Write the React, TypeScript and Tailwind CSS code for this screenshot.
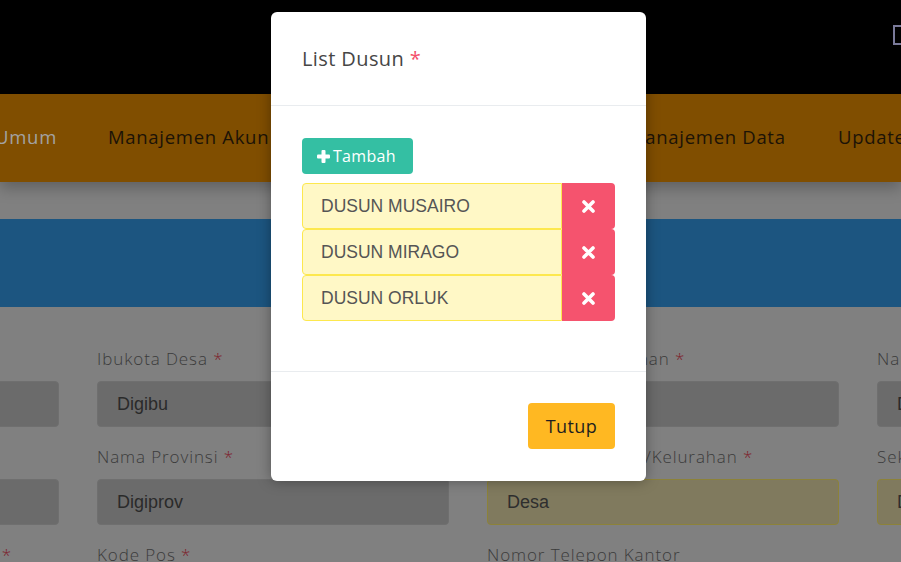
import React from "react";

const poppins = { fontFamily: '"Open Sans", "Noto Sans", sans-serif' };
const arial = { fontFamily: '"Liberation Sans", Arial, sans-serif' };

function Field({ label, req, value, yellow }: { label?: string; req?: boolean; value?: string; yellow?: boolean }) {
  return (
    <div className="w-[352px] shrink-0 flex flex-col">
      <div className="h-[24px] text-[17px] tracking-[0.9px] font-light text-[#3b3b3b] whitespace-nowrap leading-[24px]" style={poppins}>
        {label}
        {req && <span className="text-[#7e1d2a]"> *</span>}
      </div>
      {value !== undefined && (
        <div
          className={
            "mt-[10px] h-[46px] rounded-[4px] border flex items-center px-[19px] text-[18px] " +
            (yellow ? "bg-[#807a5e] border-[#8c8239] text-[#2e2e2e]" : "bg-[#6b6b6b] border-[#6f6f6f] text-[#2a2a2a]")
          }
          style={arial}
        >
          {value}
        </div>
      )}
    </div>
  );
}

function Plus() {
  return (
    <svg width="13" height="13" viewBox="0 0 13 13" className="mr-[3px]">
      <rect x="4.5" y="0" width="4" height="13" rx="1" fill="white" />
      <rect x="0" y="4.5" width="13" height="4" rx="1" fill="white" />
    </svg>
  );
}

function Times() {
  return (
    <svg width="13" height="13" viewBox="0 0 13 13">
      <path d="M2 2 L11 11 M11 2 L2 11" stroke="white" strokeWidth="3.6" strokeLinecap="round" />
    </svg>
  );
}

function Item({ name }: { name: string }) {
  return (
    <div className="flex h-[46px]">
      <div
        className="flex-1 bg-[#fff8c6] border border-[#fde84e] rounded-l-[4px] flex items-center pl-[18px] text-[17.5px] text-[#555]"
        style={arial}
      >
        {name}
      </div>
      <div className="w-[53px] bg-[#f5536e] rounded-r-[4px] flex items-center justify-center">
        <Times />
      </div>
    </div>
  );
}

export default function App() {
  return (
    <div className="relative w-[901px] h-[562px] overflow-hidden bg-[#808080]" style={poppins}>
      {/* top bar */}
      <div className="h-[94px] bg-black flex justify-end items-start">
        <div className="mt-[25px] mr-[-6px] w-[14px] h-[20px] border-2 border-[#7a7a9a] border-r-0 text-transparent">D</div>
      </div>
      {/* nav */}
      <div className="relative z-10 h-[88px] pb-[3px] bg-[#804e00] flex items-center text-[18.5px] tracking-[0.7px] text-[#1c1307] whitespace-nowrap shadow-[0_6px_14px_rgba(0,0,0,0.25)]">
        <div className="w-[208px] ml-[-100px] shrink-0 text-right pr-[51px] text-[#a3a3a3]">Data Umum</div>
        <div className="w-[213px] shrink-0">Manajemen Akun</div>
        <div className="w-[307px] shrink-0">Manajemen Pengguna</div>
        <div className="w-[210px] shrink-0">Manajemen Data</div>
        <div className="shrink-0">Update Data</div>
      </div>
      <div className="h-[37px]" />
      {/* blue band */}
      <div className="h-[88px] bg-[#1c5580]" />
      {/* form */}
      <div className="ml-[-293px] pt-[40px] flex flex-col gap-[18px]">
        <div className="flex gap-[38px]">
          <Field label="Kode Desa" req value="" />
          <Field label="Ibukota Desa" req value="Digibu" />
          <Field label="Kode Desa/Kelurahan" req value="" />
          <Field label="Nama Kabupaten" req value="Digikab" />
        </div>
        <div className="flex gap-[38px]">
          <Field label="Nama Kecamatan" req value="" />
          <Field label="Nama Provinsi" req value="Digiprov" />
          <Field label="Nama Kepala Desa/Kelurahan" req value="Desa" yellow />
          <Field label="Sekretaris Desa" req value="Desa" yellow />
        </div>
        <div className="flex gap-[38px]">
          <Field label="Nama Sekretaris Desa / Kelurahan" req />
          <Field label="Kode Pos" req />
          <Field label="Nomor Telepon Kantor" />
          <Field />
        </div>
      </div>

      {/* modal */}
      <div className="absolute z-20 left-[271px] top-[12px] w-[375px] h-[469px] bg-white rounded-[6px] shadow-[0_0_14px_rgba(0,0,0,0.35)] flex flex-col">
        <div className="h-[94px] border-b border-[#e9ecef] flex items-center px-[31px] pt-[1px]">
          <span className="text-[20px] tracking-[0.4px] text-[#464646]" style={poppins}>
            List Dusun <span className="text-[#f4516c]">*</span>
          </span>
        </div>
        <div className="h-[266px] border-b border-[#e9ecef] px-[31px] pt-[32px]">
          <div className="inline-flex items-center h-[36px] w-[111px] pl-[15px] bg-[#34bfa3] rounded-[4px] text-white text-[16px] tracking-[0.3px] font-medium" style={poppins}>
            <Plus />
            Tambah
          </div>
          <div className="mt-[9px] flex flex-col">
            <Item name="DUSUN MUSAIRO" />
            <Item name="DUSUN MIRAGO" />
            <Item name="DUSUN ORLUK" />
          </div>
        </div>
        <div className="flex-1 flex justify-end items-start px-[31px] pt-[31px]">
          <div className="h-[46px] w-[87px] bg-[#ffb822] rounded-[4px] flex items-center justify-center text-[18px] tracking-[0.4px] text-[#1f1f1f]" style={poppins}>
            Tutup
          </div>
        </div>
      </div>
    </div>
  );
}
